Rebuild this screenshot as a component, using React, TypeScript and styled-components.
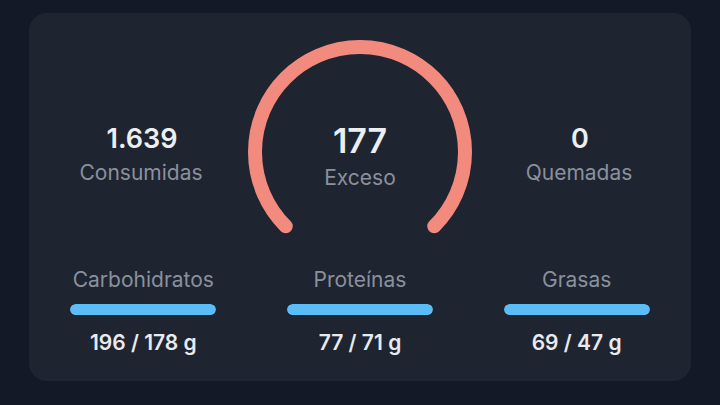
import styled, { createGlobalStyle } from "styled-components"

type Macro = {
    name: string
    eaten: number
    goal: number
}

const macros: Macro[] = [
    { name: "Carbohidratos", eaten: 196, goal: 178 },
    { name: "Proteínas", eaten: 77, goal: 71 },
    { name: "Grasas", eaten: 69, goal: 47 },
]

const GAUGE_R = 105
const GAUGE_STROKE = 14
const GAUGE_C = GAUGE_R + GAUGE_STROKE / 2 + 1

// 270° arc, open at the bottom
function arcPath(progress: number) {
    const start = 135
    const end = start + 270 * Math.min(progress, 1)
    const pt = (deg: number) => {
        const a = (deg * Math.PI) / 180
        return [GAUGE_C + GAUGE_R * Math.cos(a), GAUGE_C + GAUGE_R * Math.sin(a)]
    }
    const [x1, y1] = pt(start)
    const [x2, y2] = pt(end)
    const large = end - start > 180 ? 1 : 0
    return `M ${x1} ${y1} A ${GAUGE_R} ${GAUGE_R} 0 ${large} 1 ${x2} ${y2}`
}

// thousands with a dot, as in es-ES
const fmt = (n: number) => String(n).replace(/\B(?=(\d{3})+(?!\d))/g, ".")

export default function App() {
    const consumed = 1639
    const burned = 0
    const goal = 1462
    const over = consumed - burned - goal

    return (
        <>
            <GlobalStyle />
            <Card>
                <TopRow>
                    <Stat>
                        <StatValue>{fmt(consumed)}</StatValue>
                        <StatLabel>Consumidas</StatLabel>
                    </Stat>
                    <Gauge>
                        <GaugeSvg
                            width={GAUGE_C * 2}
                            height={196}
                            viewBox={`0 0 ${GAUGE_C * 2} 196`}
                        >
                            <path
                                d={arcPath(1)}
                                fill="none"
                                stroke="#f38a7e"
                                strokeWidth={GAUGE_STROKE}
                                strokeLinecap="round"
                            />
                        </GaugeSvg>
                        <GaugeText>
                            <GaugeValue>{over}</GaugeValue>
                            <StatLabel>Exceso</StatLabel>
                        </GaugeText>
                    </Gauge>
                    <Stat>
                        <StatValue>{fmt(burned)}</StatValue>
                        <StatLabel>Quemadas</StatLabel>
                    </Stat>
                </TopRow>
                <MacroRow>
                    {macros.map((m) => (
                        <MacroItem key={m.name}>
                            <MacroName>{m.name}</MacroName>
                            <Track>
                                <Fill
                                    style={{
                                        width: `${Math.min(m.eaten / m.goal, 1) * 100}%`,
                                    }}
                                />
                            </Track>
                            <MacroAmount>
                                {m.eaten} / {m.goal} g
                            </MacroAmount>
                        </MacroItem>
                    ))}
                </MacroRow>
            </Card>
        </>
    )
}

const GlobalStyle = createGlobalStyle`
    html, body {
        margin: 0;
        background: #131926;
        font-family: "Inter", "Noto Sans", sans-serif;
    }
`

const Card = styled.div`
    box-sizing: border-box;
    margin: 13px 0 0 29px;
    width: 662px;
    height: 368px;
    padding: 26px 6px 0;
    background: #1e2430;
    border-radius: 18px;
`

const TopRow = styled.div`
    display: grid;
    grid-template-columns: repeat(3, 1fr);
    align-items: start;
`

const Stat = styled.div`
    display: flex;
    flex-direction: column;
    align-items: center;
    padding-top: 84px;
`

const StatValue = styled.div`
    font-size: 27px;
    line-height: 32px;
    font-weight: 600;
    color: #eceef1;
    margin-left: 2px;
`

const StatLabel = styled.div`
    font-size: 21px;
    line-height: 26px;
    color: #8a919c;
    margin-top: 5px;
`

const Gauge = styled.div`
    display: grid;
    justify-items: center;
    & > * {
        grid-area: 1 / 1;
    }
`

const GaugeSvg = styled.svg`
    display: block;
`

const GaugeText = styled.div`
    display: flex;
    flex-direction: column;
    align-items: center;
    padding-top: 83px;
`

const GaugeValue = styled.div`
    font-size: 34px;
    line-height: 38px;
    font-weight: 600;
    color: #eceef1;
`

const MacroRow = styled.div`
    display: grid;
    grid-template-columns: repeat(3, 1fr);
    margin-top: 32px;
`

const MacroItem = styled.div`
    display: flex;
    flex-direction: column;
    align-items: center;
`

const MacroName = styled.div`
    font-size: 21px;
    line-height: 26px;
    color: #8a919c;
`

const Track = styled.div`
    width: 146px;
    height: 11px;
    margin-top: 11px;
    border-radius: 6px;
    background: #2c3442;
    overflow: hidden;
`

const Fill = styled.div`
    height: 100%;
    border-radius: 6px;
    background: #5bbdf7;
`

const MacroAmount = styled.div`
    margin-top: 15px;
    font-size: 21px;
    line-height: 26px;
    font-weight: 600;
    color: #e8eaee;
`
